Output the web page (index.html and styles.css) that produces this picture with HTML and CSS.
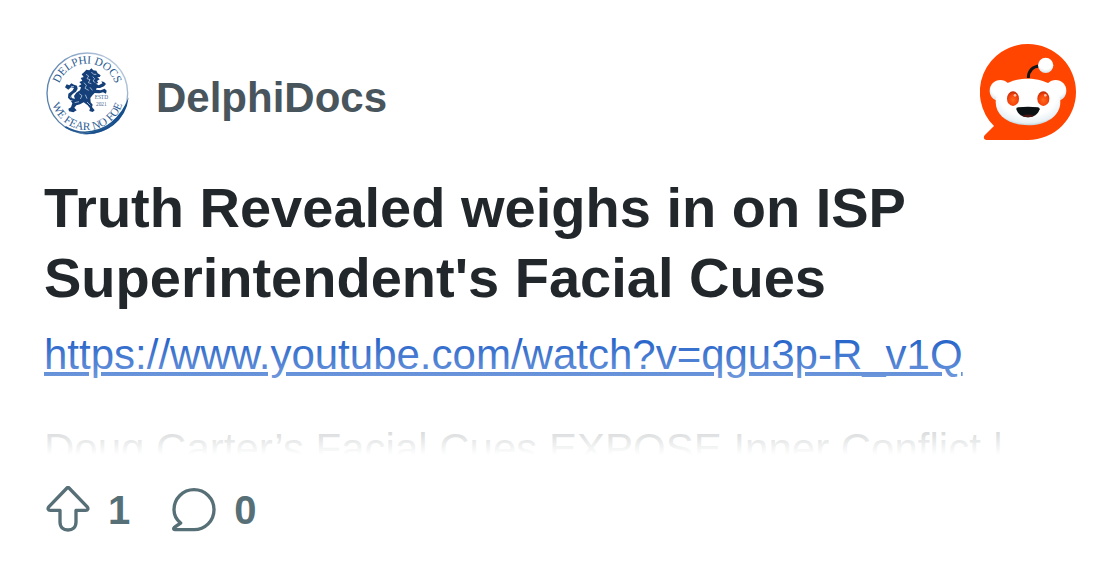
FILE: index.html
```
<!DOCTYPE html>
<html lang="en">
<head>
  <meta charset="UTF-8">
  <meta name="viewport" content="width=device-width, initial-scale=1">
  <title>DelphiDocs</title>
  <link rel="stylesheet" href="styles.css">
</head>
<body>
<article class="card">
  <header class="card-header">
    <!-- community seal -->
    <svg class="avatar" viewBox="24 0 288 288" aria-hidden="true">
      <defs>
        <path id="arc-top" d="M65 148 A89 89 0 0 1 243 148"/>
        <path id="arc-bottom" d="M44 148 A110 110 0 0 0 264 148"/>
        <linearGradient id="ring" x1="0" y1="1" x2="1" y2="0">
          <stop offset="0" stop-color="#4c78aa"/>
          <stop offset="0.5" stop-color="#6c8eb5"/>
          <stop offset="1" stop-color="#d5dfeb"/>
        </linearGradient>
      </defs>
      <circle cx="154" cy="148" r="121" fill="none" stroke="url(#ring)" stroke-width="4"/>
      <path d="M278 160 Q272 213 232 244 Q189 275 139 270 Q194 262 226 234 Q261 205 278 160Z" fill="#164f8c"/>
      <path d="M88 248 Q150 286 231 238" fill="none" stroke="#22588f" stroke-width="5"/>
      <text class="seal-text" text-anchor="middle"><textPath href="#arc-top" startOffset="50%">DELPHI DOCS</textPath></text>
      <text class="seal-text" text-anchor="middle"><textPath href="#arc-bottom" startOffset="50%">WE FEAR NO FOE</textPath></text>
      <text class="seal-small" x="196" y="166" text-anchor="middle">ESTD</text>
      <text class="seal-small" x="196" y="185" text-anchor="middle">2021</text>
      <g fill="#153f78">
        <path d="M144 85 L151 77 L160 79 L166 73 L172 79 L181 80 L185 88 L194 94 L191 99 L184 100 L191 106 L183 111 L187 117 L180 119 L188 124 L199 118 L196 112 L204 114 L210 120 L204 127 L192 132 L182 132 L180 137 L194 139 L206 134 L212 140 L210 149 L201 145 L190 148 L176 147 L170 153 L163 162 L164 175 L170 182 L168 189 L176 199 L170 204 L160 201 L162 193 L155 184 L143 175 L132 181 L121 184 L115 191 L122 199 L112 205 L99 202 L97 194 L105 190 L109 178 L105 172 L117 166 L114 156 L121 146 L132 139 L135 130 L127 127 L136 121 L130 114 L139 110 L134 102 L143 99 L137 91Z"/>
        <path d="M87 130 L92 121 L100 124 L106 118 L114 122 L123 125 L125 134 L120 143 L111 149 L105 156 L109 163 L119 165 L116 171 L103 169 L96 161 L97 149 L109 140 L114 132 L105 130 L97 137Z"/>
      </g>
      <g fill="none" stroke="#dce8f5" stroke-width="2">
        <path d="M150 91 L158 96 L153 104 L162 107 L157 116 L166 119 M166 84 L173 91 L181 91 M170 98 L176 104 L171 111 L178 116 M144 116 L151 124 L147 133 L158 139 M162 130 L169 139 M130 149 L138 155 L133 165 M148 152 L153 164 M116 176 L129 173 M153 174 L163 184 M105 127 L114 128 M103 158 L106 162"/>
      </g>
    </svg>
    <span class="community">DelphiDocs</span>
    <!-- reddit logo -->
    <svg class="logo" viewBox="30 24 288 288" role="img" aria-label="Reddit">
      <defs>
        <radialGradient id="head" cx="0.5" cy="0.35" r="0.68">
          <stop offset="0.65" stop-color="#fff"/>
          <stop offset="0.88" stop-color="#e8f0f4"/>
          <stop offset="1" stop-color="#a9bcc6"/>
        </radialGradient>
        <radialGradient id="ball" cx="0.5" cy="0.3" r="0.75">
          <stop offset="0.6" stop-color="#fff"/>
          <stop offset="1" stop-color="#ccd9df"/>
        </radialGradient>
        <radialGradient id="eye" cx="0.5" cy="0.6" r="0.6">
          <stop offset="0" stop-color="#ff6a1a"/>
          <stop offset="0.65" stop-color="#f4420c"/>
          <stop offset="1" stop-color="#b82a08"/>
        </radialGradient>
      </defs>
      <path d="M174 24 A144 144 0 0 1 174 312 H50 C42 312 39 304 44 298 L72 270 A144 144 0 0 1 174 24Z" fill="#ff4500"/>
      <circle cx="91" cy="164" r="32" fill="url(#ball)"/>
      <circle cx="257" cy="164" r="32" fill="url(#ball)"/>
      <path d="M175 126 C175 105 187 91 210 90" fill="none" stroke="#101518" stroke-width="9"/>
      <circle cx="227" cy="88" r="23" fill="url(#ball)"/>
      <path d="M174 128 C232 128 271 157 271 198 C271 240 229 268 174 268 C119 268 77 240 77 198 C77 157 116 128 174 128Z" fill="url(#head)"/>
      <ellipse cx="129" cy="188" rx="18" ry="22" fill="url(#eye)"/>
      <ellipse cx="220" cy="188" rx="18" ry="22" fill="url(#eye)"/>
      <circle cx="135" cy="178" r="4" fill="#ffc1a5"/>
      <circle cx="226" cy="178" r="4" fill="#ffc1a5"/>
      <path d="M144 214 Q174 211 204 214 Q210 215 209 220 C204 236 191 244 174 244 C157 244 144 236 139 220 Q138 215 144 214Z" fill="#0c1114"/>
      <path d="M155 239 Q174 232 193 239 Q185 244 174 244 Q163 244 155 239Z" fill="#4a1614"/>
    </svg>
  </header>

  <h1 class="title">Truth Revealed weighs in on ISP Superintendent's Facial Cues</h1>

  <div class="post-body">
    <p><a href="https://www.youtube.com/watch?v=qgu3p-R_v1Q">https://www.youtube.com/watch?v=qgu3p-R_v1Q</a></p>
    <p>Doug Carter’s Facial Cues EXPOSE Inner Conflict |</p>
  </div>

  <footer class="stats">
    <span class="stat">
      <svg class="icon" viewBox="24 30 144 144" aria-hidden="true">
        <path d="M93 36 Q96 33 99 36 L153 92 C158 98 156 103 149 103 H120 V138 C120 154 110 162 96 162 C82 162 72 154 72 138 V103 H43 C36 103 34 98 39 92Z"/>
      </svg>
      1
    </span>
    <span class="stat">
      <svg class="icon" viewBox="402 30 144 144" aria-hidden="true">
        <path d="M474 161 H417 C412 161 412 157 415 154 L434 141 Q414 125 414 101 A60 60 0 1 1 474 161Z"/>
      </svg>
      0
    </span>
  </footer>
</article>
</body>
</html>
```
FILE: styles.css
```
body {
  margin: 0;
  background-color: #fff;
  font-family: "Liberation Sans", Arial, sans-serif;
}

.card {
  padding: 44px;
}

/* header */
.card-header {
  display: flex;
  align-items: center;
  gap: 16px;
}

.avatar,
.logo {
  width: 96px;
  height: 96px;
  flex-shrink: 0;
}

.logo {
  margin-left: auto;
}

.community {
  font-size: 42px;
  line-height: 56px;
  font-weight: bold;
  color: #48555c;
  margin-top: 12px;
}

.seal-text {
  font-family: "Liberation Serif", serif;
  font-size: 34px;
  fill: #2b5b92;
}

.seal-small {
  font-family: "Liberation Serif", serif;
  font-size: 16px;
  fill: #45658e;
}

/* post */
.title {
  margin: 33px 0 14px;
  font-size: 56px;
  line-height: 70px;
  color: #21272a;
}

.post-body {
  position: relative;
  height: 128px;
  overflow: hidden;
  font-size: 42px;
  line-height: 56px;
  color: #333d42;
}

/* fade out the end of the preview */
.post-body::after {
  content: "";
  position: absolute;
  inset: 0;
  background: linear-gradient(rgba(255, 255, 255, 0), #fff);
  pointer-events: none;
}

.post-body p {
  margin: 0 0 38px;
}

.post-body a {
  color: #0f54c4;
}

/* votes and comments */
.stats {
  display: flex;
  gap: 40px;
  margin-top: 31px;
}

.stat {
  display: flex;
  align-items: center;
  gap: 16px;
  font-size: 40px;
  line-height: 48px;
  font-weight: bold;
  color: #576f76;
}

.icon {
  width: 48px;
  height: 48px;
  fill: none;
  stroke: #576f76;
  stroke-width: 10;
  stroke-linejoin: round;
}
```
